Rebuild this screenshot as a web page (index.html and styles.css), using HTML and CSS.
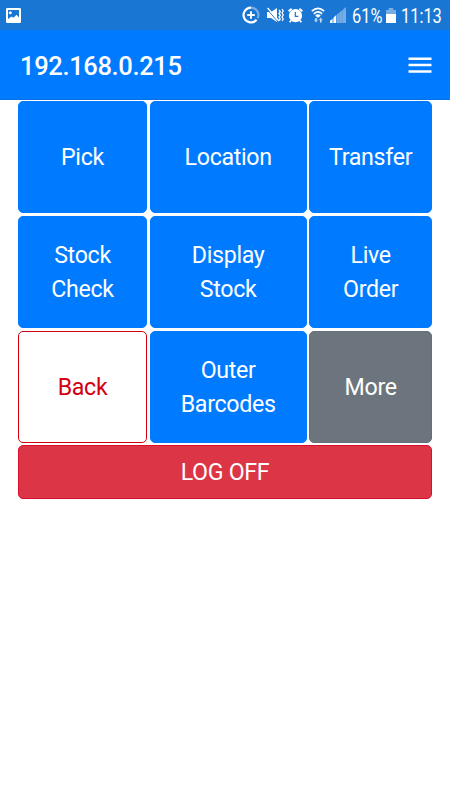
FILE: index.html
```
<!DOCTYPE html>
<html lang="en">
<head>
	<meta charset="utf-8">
	<title>192.168.0.215</title>
	<link rel="stylesheet" href="styles.css">
</head>
<body>

<div class="status-bar">
	<svg class="icon-picture" width="15" height="15" viewBox="0 0 15 15">
		<rect width="15" height="15" rx="1.3" fill="#fff"/>
		<path d="M2 2h11v7.6L10.6 6.8 7.3 9.8 5.6 8.4 2 11z" fill="#1976d2"/>
		<circle cx="4.3" cy="4.7" r="1.5" fill="#fff"/>
	</svg>

	<div class="status-right">
		<svg class="icon-data" width="18" height="18" viewBox="0 0 18 18" fill="none">
			<path d="M9 1.6a7.4 7.4 0 0 1 6.6 10.7" stroke="#75ade4" stroke-width="2.2"/>
			<path d="M9 1.6a7.4 7.4 0 1 0 5.6 12.2" stroke="#fff" stroke-width="2.2"/>
			<path d="M9 5.2v7.6M5.2 9h7.6" stroke="#fff" stroke-width="1.9"/>
		</svg>
		<svg class="icon-mute" width="17" height="16" viewBox="0 0 17 16" fill="none">
			<path d="M0 5h4l6-4v14l-6-4H0z" fill="#fff"/>
			<path d="M0 2.2L11 14.8" stroke="#1976d2" stroke-width="1"/>
			<path d="M.6 1L12 14" stroke="#fff" stroke-width="1.4"/>
			<path d="M12 3l1.3 1.7L12 6.5l1.3 1.8-1.3 1.8 1.3 1.8-1.3 1.7M15 2l1.3 2L15 6l1.3 2L15 10l1.3 2L15 14" stroke="#fff" stroke-width="1.3"/>
		</svg>
		<svg class="icon-alarm" width="15" height="15" viewBox="0 0 15 15" fill="none">
			<circle cx="7.5" cy="7.7" r="6.6" fill="#fff"/>
			<path d="M.6 3.3L3.6.8M14.4 3.3L11.4.8M3 12.5l-1.3 1.8M12 12.5l1.3 1.8" stroke="#fff" stroke-width="1.8"/>
			<path d="M7.3 4v4.3h3" stroke="#1976d2" stroke-width="1.2"/>
		</svg>
		<svg class="icon-wifi" width="14" height="16" viewBox="0 0 14 16" fill="none">
			<path d="M.8 4.2Q7-1.6 13.2 4.2M2.8 6.8Q7 3 11.2 6.8M4.7 9.2Q7 7.2 9.3 9.2" stroke="#fff" stroke-width="1.6"/>
			<path d="M5.4 9h3.2L7 11z" fill="#fff"/>
			<path d="M5 11v2.5M9.8 15.5V13" stroke="#fff" stroke-width="1.2"/>
			<path d="M3 12.8h4L5 15.5zM7.8 13.2h4l-2-2.6z" fill="#b5d3f1"/>
		</svg>
		<svg class="icon-signal" width="16" height="16" viewBox="0 0 16 16">
			<path d="M0 16v-2.2l2.6-2V16zM3.4 16v-5.3L6 8.3V16z" fill="#fff"/>
			<path d="M6.4 16V8L16 0v16z" fill="#75ade4"/>
			<path d="M9.2 5v11M12.2 2v14" stroke="#1976d2" stroke-width=".25"/>
		</svg>
		<span class="percent">61%</span>
		<svg class="icon-battery" width="10" height="15" viewBox="0 0 10 15">
			<path d="M2.7 0h4.6v2H10v5H0V2h2.7z" fill="#75ade4"/>
			<path d="M0 6h10v9H0z" fill="#fff"/>
		</svg>
		<span class="clock">11:13</span>
	</div>
</div>

<div class="header">
	<span class="title">192.168.0.215</span>
	<svg class="menu" width="24" height="16" viewBox="0 0 24 16">
		<path d="M.5 1.8h23M.5 8.1h23M.5 14.4h23" stroke="#fff" stroke-width="2.5"/>
	</svg>
</div>

<div class="buttons">
	<button class="btn">Pick</button>
	<button class="btn">Location</button>
	<button class="btn">Transfer</button>
	<button class="btn">Stock<br>Check</button>
	<button class="btn">Display<br>Stock</button>
	<button class="btn">Live<br>Order</button>
	<button class="btn btn-back">Back</button>
	<button class="btn">Outer<br>Barcodes</button>
	<button class="btn btn-more">More</button>
	<button class="btn btn-logoff">LOG OFF</button>
</div>

</body>
</html>
```
FILE: styles.css
```
*{
	margin: 0;
	padding: 0;
	box-sizing: border-box;
}

body{
	background-color: #fff;
	font-family: Roboto, sans-serif;
}

.status-bar{
	height: 30px;
	padding: 0 7px 0 6px;
	background-color: #1976d2;
	color: #fff;
	display: flex;
	justify-content: space-between;
	align-items: center;
}

.status-right{
	display: flex;
	align-items: center;
	font-size: 19.5px;
	line-height: 30px;
}

.icon-mute{
	margin-left: 7px;
}

.icon-alarm{
	margin-left: 4px;
}

.icon-wifi{
	margin-left: 8px;
}

.icon-signal{
	margin-left: 5px;
}

/* narrow digits */
.percent,
.clock{
	padding-top: 3px;
	white-space: nowrap;
	transform: scaleX(0.84);
	transform-origin: left;
}

.percent{
	width: 30px;
	margin-left: 6px;
}

.icon-battery{
	margin-left: 4px;
}

.clock{
	width: 42px;
	margin-left: 5px;
}

/* top bar */
.header{
	height: 70px;
	padding: 0 18px 0 20px;
	background-color: #007bff;
	border-bottom: 1px solid #0a6fe0;
	display: flex;
	justify-content: space-between;
	align-items: center;
}

.title{
	color: #fff;
	font-size: 25.5px;
	font-weight: 500;
	letter-spacing: -0.35px;
	line-height: 30px;
	padding-top: 3px;
}

/* 3 columns, log off takes the whole row */
.buttons{
	display: grid;
	grid-template-columns: 129px 157.3px 122.7px;
	grid-template-rows: 112.4px 112.4px 112.4px 54px;
	gap: 2.4px 2.5px;
	padding: 1px 18px;
}

.btn{
	border: 1px solid #007bff;
	border-radius: 5px;
	background-color: #007bff;
	color: #fff;
	font-family: inherit;
	font-size: 23.2px;
	letter-spacing: -0.32px;
	line-height: 34px;
}

.btn-back{
	background-color: #fff;
	border-color: #d3000f;
	color: #d3000f;
}

.btn-more{
	background-color: #6c757d;
	border-color: #66707a;
}

.btn-logoff{
	grid-column: 1 / 4;
	background-color: #dc3545;
	border-color: #d8102c;
}
```
